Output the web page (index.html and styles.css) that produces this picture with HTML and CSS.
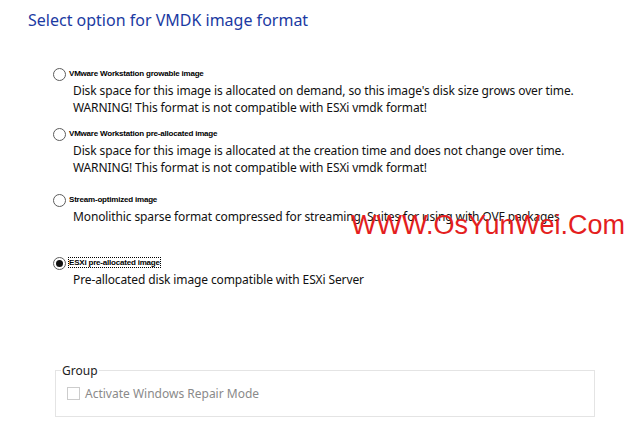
FILE: index.html
```html
<!DOCTYPE html>
<html lang="en">
<head>
    <meta charset="UTF-8">
    <meta name="viewport" content="width=device-width, initial-scale=1.0">
    <title>VMDK image format</title>
    <link rel="stylesheet" href="styles.css">
</head>
<body>
    <h1 class="title">Select option for VMDK image format</h1>

    <div class="options">
        <div class="option opt-1">
            <label class="choice">
                <input type="radio" name="format" class="radio">
                <span class="choice-name">VMware Workstation growable image</span>
            </label>
            <p class="desc">Disk space for this image is allocated on demand, so this image's disk size grows over time.<br>WARNING! This format is not compatible with ESXi vmdk format!</p>
        </div>
        <div class="option opt-2">
            <label class="choice">
                <input type="radio" name="format" class="radio">
                <span class="choice-name">VMware Workstation pre-allocated image</span>
            </label>
            <p class="desc">Disk space for this image is allocated at the creation time and does not change over time.<br>WARNING! This format is not compatible with ESXi vmdk format!</p>
        </div>
        <div class="option opt-3">
            <label class="choice">
                <input type="radio" name="format" class="radio">
                <span class="choice-name">Stream-optimized image</span>
            </label>
            <p class="desc">Monolithic sparse format compressed for streaming. Suites for using with OVF packages</p>
        </div>
        <div class="option opt-4">
            <label class="choice">
                <input type="radio" name="format" class="radio" checked>
                <span class="choice-name focused">ESXi pre-allocated image</span>
            </label>
            <p class="desc">Pre-allocated disk image compatible with ESXi Server</p>
        </div>
    </div>

    <fieldset class="group">
        <legend>Group</legend>
        <label class="check">
            <input type="checkbox" class="checkbox" disabled>
            <span>Activate Windows Repair Mode</span>
        </label>
    </fieldset>

    <div class="watermark">WWW.OsYunWei.Com</div>
</body>
</html>
```
FILE: styles.css
```css
body {
    margin: 0;
    background-color: #ffffff;
    font-family: 'Noto Sans', 'Open Sans', sans-serif;
    color: #111111;
    position: relative;
    height: 427px;
    overflow: hidden;
}
.title {
    margin: 0;
    padding: 9px 0 0 28px;
    font-size: 16px;
    font-weight: normal;
    line-height: 22px;
    color: #1b3aa2;
}
.options {
    padding-left: 53px;
    margin-top: 37px;
}
.option {
    display: flex;
    flex-direction: column;
}
.opt-2 { margin-top: 12px; }
.opt-3 { margin-top: 18px; }
.opt-4 { margin-top: 32px; }
.choice {
    display: flex;
    align-items: flex-start;
    height: 12px;
}
.radio {
    appearance: none;
    margin: 0;
    width: 13px;
    height: 13px;
    border: 1px solid #5c5c5c;
    border-radius: 50%;
    background: #ffffff;
    box-sizing: border-box;
    display: flex;
    align-items: center;
    justify-content: center;
}
.radio:checked::after {
    content: "";
    width: 7px;
    height: 7px;
    border-radius: 50%;
    background: #111111;
}
.choice-name {
    font-family: 'Liberation Sans', Arial, sans-serif;
    font-weight: bold;
    font-size: 8px;
    line-height: 9px;
    margin-left: 3px;
    margin-top: 1px;
    letter-spacing: -0.2px;
    color: #000000;
}
.choice-name.focused {
    outline: 1px dotted #000000;
    outline-offset: 0;
}
.desc {
    margin: 2px 0 0;
    padding-left: 20px;
    font-size: 12px;
    line-height: 17px;
    letter-spacing: -0.12px;
}
.group {
    margin: 0;
    position: absolute;
    left: 55px;
    top: 362px;
    width: 540px;
    height: 55px;
    box-sizing: border-box;
    border: 1px solid #e4e4e4;
    padding: 6px 11px 4px;
}
.group legend {
    padding: 0 1px;
    margin-left: -6px;
    font-size: 12px;
    color: #222222;
}
.check {
    display: flex;
    align-items: center;
    color: #8a8a8a;
    font-size: 12px;
}
.checkbox {
    appearance: none;
    margin: 0 5px 0 0;
    width: 13px;
    height: 13px;
    border: 1px solid #cccccc;
    background: #ffffff;
}
.watermark {
    position: absolute;
    left: 351px;
    top: 210px;
    font-family: 'Liberation Sans', Arial, sans-serif;
    font-size: 27px;
    color: #e41e20;
    white-space: nowrap;
}
```
